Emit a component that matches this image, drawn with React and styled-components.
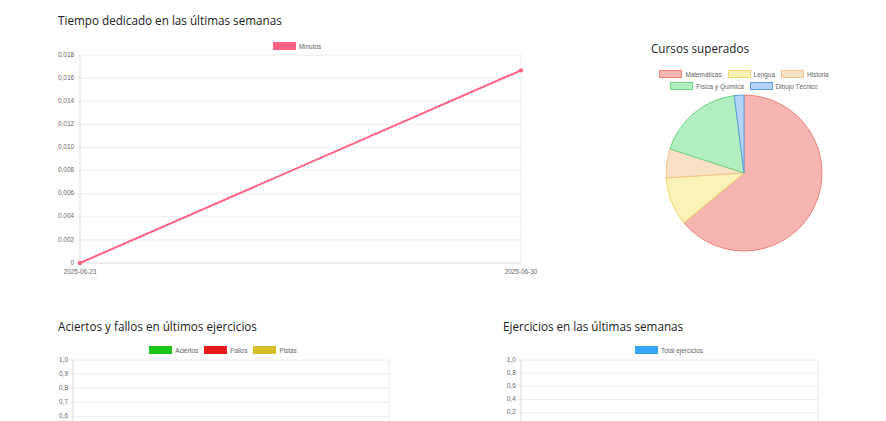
import styled, { createGlobalStyle } from "styled-components"

const GlobalStyle = createGlobalStyle`
  html, body {
    margin: 0;
    padding: 0;
    background: #ffffff;
    overflow: hidden;
  }
  body {
    font-family: "Open Sans", "Liberation Sans", sans-serif;
  }
`

const Page = styled.div`
  width: 886px;
  height: 421px;
  overflow: hidden;
  box-sizing: border-box;
  padding-left: 58px;
`

const Row = styled.div`
  display: grid;
  grid-template-columns: ${p => p.$cols};
  column-gap: 115px;
  height: ${p => p.$height || "auto"};
  margin-top: ${p => p.$top || 0}px;
`

const Column = styled.div`
  display: flex;
  flex-direction: column;
  padding-top: ${p => p.$top || 0}px;
`

const Title = styled.h2`
  margin: 0;
  font-size: 11.7px;
  line-height: 18px;
  font-weight: 400;
  color: #222222;
  white-space: nowrap;
`

const Legend = styled.div`
  display: flex;
  flex-wrap: wrap;
  justify-content: center;
  column-gap: 6px;
  margin-top: ${p => p.$top || 0}px;
`

const LegendItem = styled.div`
  display: inline-flex;
  align-items: center;
  gap: 3px;
  height: 12px;
  font-family: "Liberation Sans", Arial, sans-serif;
  font-size: 6.4px;
  color: #666666;
  white-space: nowrap;
`

const Swatch = styled.span`
  width: 21px;
  height: 6px;
  border: 1px solid ${p => p.$border};
  background: ${p => p.$fill};
`

const ChartSvg = styled.svg`
  display: block;
  overflow: visible;
  font-family: "Liberation Sans", Arial, sans-serif;
`

function LegendList({ items, top }) {
  return (
    <Legend $top={top}>
      {items.map(it => (
        <LegendItem key={it.label}>
          <Swatch $fill={it.fill} $border={it.border || it.fill} />
          {it.label}
        </LegendItem>
      ))}
    </Legend>
  )
}

// ticks: labels that are drawn; total: how many grid steps the full axis has
function AxisChart({ width, height, x0, x1, top, step, ticks, total, labelX, xLabels, line }) {
  const steps = total || ticks.length - 1
  const bottom = top + step * steps
  const yFor = v => bottom - (v / line.max) * (bottom - top)
  const shown = ticks.filter((_, i) => top + i * step < height - 2)
  return (
    <ChartSvg width={width} height={height}>
      {shown.map((t, i) => {
        const y = top + i * step
        return (
          <g key={t}>
            <line x1={x0 - 3} x2={x1} y1={y} y2={y} stroke={i === steps ? "#dddddd" : "#ececec"} strokeWidth="1" />
            <text x={labelX} y={y} textAnchor="end" dominantBaseline="middle" fontSize="6.4" fill="#666">{t}</text>
          </g>
        )
      })}
      <line x1={x0} x2={x0} y1={top} y2={Math.min(bottom + 3, height)} stroke="#dddddd" strokeWidth="1" />
      <line x1={x1} x2={x1} y1={top} y2={Math.min(bottom + 3, height)} stroke="#ececec" strokeWidth="1" />
      {xLabels && xLabels.map((l, i) => (
        <text key={l} x={i === 0 ? x0 : x1} y={bottom + 9} textAnchor="middle" dominantBaseline="middle" fontSize="6.4" fill="#666">{l}</text>
      ))}
      {line && (
        <g>
          <line x1={x0} y1={yFor(line.values[0])} x2={x1} y2={yFor(line.values[1])} stroke="#ff6384" strokeWidth="2" strokeLinecap="round" />
          <circle cx={x0} cy={yFor(line.values[0])} r="2.2" fill="#ff6384" />
          <circle cx={x1} cy={yFor(line.values[1])} r="2.2" fill="#ff6384" />
        </g>
      )}
    </ChartSvg>
  )
}

const courses = [
  { label: "Matemáticas", value: 32, fill: "#f5b6b1", border: "#ea8278" },
  { label: "Lengua", value: 5, fill: "#faf2b9", border: "#f1d96a" },
  { label: "Historia", value: 3, fill: "#f9e1c6", border: "#f2c48a" },
  { label: "Física y Química", value: 9, fill: "#b3eec1", border: "#6bd783" },
  { label: "Dibujo Técnico", value: 1, fill: "#b4d3f6", border: "#5d9de2" },
]

function PieChart({ data, size, r }) {
  const total = data.reduce((s, d) => s + d.value, 0)
  const cx = size / 2
  const cy = r + 3
  let acc = 0
  const point = a => [cx + r * Math.sin(a), cy - r * Math.cos(a)]
  return (
    <ChartSvg width={size} height={r * 2 + 8}>
      {data.map(d => {
        const a0 = (acc / total) * Math.PI * 2
        acc += d.value
        const a1 = (acc / total) * Math.PI * 2
        const [sx, sy] = point(a0)
        const [ex, ey] = point(a1)
        const large = a1 - a0 > Math.PI ? 1 : 0
        return (
          <path
            key={d.label}
            d={`M${cx} ${cy} L${sx} ${sy} A${r} ${r} 0 ${large} 1 ${ex} ${ey} Z`}
            fill={d.fill}
            stroke={d.border}
            strokeWidth="1"
            strokeLinejoin="round"
          />
        )
      })}
    </ChartSvg>
  )
}

export default function App() {
  return (
    <>
      <GlobalStyle />
      <Page>
        <Row $cols="478px 186px" $height="287px">
          <Column $top={11}>
            <Title>Tiempo dedicado en las últimas semanas</Title>
            <LegendList top={11} items={[{ label: "Minutos", fill: "#ff6384" }]} />
            <AxisChart
              width={478}
              height={235}
              x0={22}
              x1={463}
              top={3}
              step={23.11}
              labelX={16}
              ticks={["0,018", "0,016", "0,014", "0,012", "0,010", "0,008", "0,006", "0,004", "0,002", "0"]}
              xLabels={["2025-06-23", "2025-06-30"]}
              line={{ values: [0, 0.01667], max: 0.018 }}
            />
          </Column>
          <Column $top={39}>
            <Title>Cursos superados</Title>
            <LegendList top={11} items={courses} />
            <PieChart data={courses} size={186} r={78} />
          </Column>
        </Row>
        <Row $cols="330px 332px" $top={30}>
          <Column>
            <Title>Aciertos y fallos en últimos ejercicios</Title>
            <LegendList
              top={9}
              items={[
                { label: "Aciertos", fill: "#1cc51c" },
                { label: "Fallos", fill: "#e61a1d" },
                { label: "Pistas", fill: "#d6be2b" },
              ]}
            />
            <AxisChart
              width={330}
              height={65}
              x0={15}
              x1={331}
              top={4}
              step={14.1}
              total={10}
              labelX={10}
              ticks={["1,0", "0,9", "0,8", "0,7", "0,6", "0,5", "0,4", "0,3", "0,2", "0,1", "0"]}
            />
          </Column>
          <Column>
            <Title>Ejercicios en las últimas semanas</Title>
            <LegendList top={9} items={[{ label: "Total ejercicios", fill: "#33a6f7" }]} />
            <AxisChart
              width={332}
              height={65}
              x0={18}
              x1={315}
              top={4}
              step={13.2}
              total={5}
              labelX={12.7}
              ticks={["1,0", "0,8", "0,6", "0,4", "0,2", "0"]}
            />
          </Column>
        </Row>
      </Page>
    </>
  )
}
